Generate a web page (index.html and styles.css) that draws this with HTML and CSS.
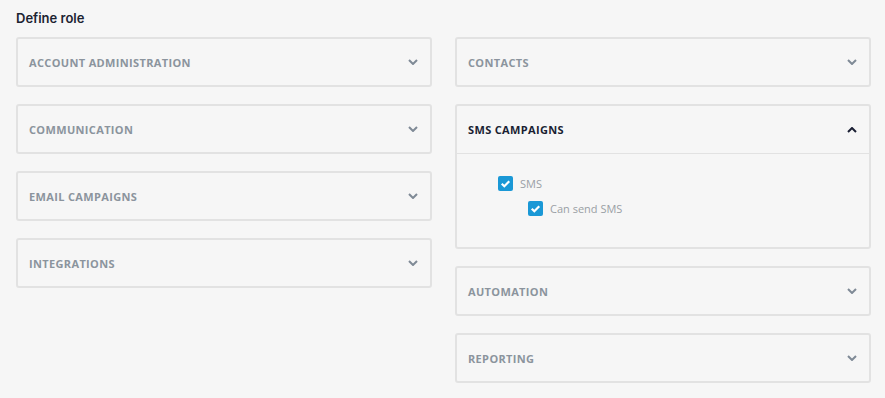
FILE: index.html
```html
<!DOCTYPE html>
<html>
<head>
<meta charset="utf-8">
<link rel="stylesheet" href="styles.css">
</head>
<body>
<div class="page">
  <h1 class="title">Define role</h1>
  <div class="columns">
    <div class="col">
      <div class="card"><div class="head"><span class="label">Account administration</span><svg class="chev" viewBox="0 0 10 6"><path d="M1 1l4 4 4-4"/></svg></div></div>
      <div class="card"><div class="head"><span class="label">Communication</span><svg class="chev" viewBox="0 0 10 6"><path d="M1 1l4 4 4-4"/></svg></div></div>
      <div class="card"><div class="head"><span class="label">Email campaigns</span><svg class="chev" viewBox="0 0 10 6"><path d="M1 1l4 4 4-4"/></svg></div></div>
      <div class="card"><div class="head"><span class="label">Integrations</span><svg class="chev" viewBox="0 0 10 6"><path d="M1 1l4 4 4-4"/></svg></div></div>
    </div>
    <div class="col">
      <div class="card"><div class="head"><span class="label">Contacts</span><svg class="chev" viewBox="0 0 10 6"><path d="M1 1l4 4 4-4"/></svg></div></div>
      <div class="card open">
        <div class="head"><span class="label">SMS campaigns</span><svg class="chev up" viewBox="0 0 10 6"><path d="M1 5l4-4 4 4"/></svg></div>
        <div class="body">
          <label class="check"><span class="box"><svg viewBox="0 0 14 14"><path d="M3.5 7.2l2.4 2.4 4.6-4.8"/></svg></span>SMS</label>
          <label class="check sub"><span class="box"><svg viewBox="0 0 14 14"><path d="M3.5 7.2l2.4 2.4 4.6-4.8"/></svg></span>Can send SMS</label>
        </div>
      </div>
      <div class="card"><div class="head"><span class="label">Automation</span><svg class="chev" viewBox="0 0 10 6"><path d="M1 1l4 4 4-4"/></svg></div></div>
      <div class="card"><div class="head"><span class="label">Reporting</span><svg class="chev" viewBox="0 0 10 6"><path d="M1 1l4 4 4-4"/></svg></div></div>
    </div>
  </div>
</div>
</body>
</html>
```

FILE: styles.css
```css
html, body {
  margin: 0;
  padding: 0;
  background: #f6f6f6;
}
.page {
  padding: 10px 14px 0 16px;
  font-family: "Open Sans", "Liberation Sans", sans-serif;
}
.title {
  margin: 0 0 10px 0;
  font-family: "Inter", "Open Sans", sans-serif;
  font-size: 13px;
  font-weight: 600;
  color: #1c2331;
  line-height: 17px;
}
.columns {
  display: grid;
  grid-template-columns: 416px 416px;
  column-gap: 23px;
  align-items: start;
}
.col {
  display: flex;
  flex-direction: column;
  gap: 17px;
}
.card {
  border: 2px solid #e2e2e2;
  border-radius: 3px;
  background: #f6f6f6;
}
.head {
  height: 46px;
  display: flex;
  align-items: center;
  justify-content: space-between;
  padding: 0 12px 0 11px;
}
.label {
  text-transform: uppercase;
  font-size: 11px;
  font-weight: 700;
  letter-spacing: 0.35px;
  color: #8b949d;
}
.chev {
  width: 10px;
  height: 6px;
  fill: none;
  stroke: #7f8a96;
  stroke-width: 2;
}
.open .head {
  border-bottom: 1px solid #e2e2e2;
  height: 47px;
}
.open .label {
  color: #1a1f33;
}
.chev.up {
  stroke: #1a1f33;
}
.body {
  padding: 22px 0 31px 41px;
  display: flex;
  flex-direction: column;
  gap: 10px;
}
.check {
  display: flex;
  align-items: center;
  gap: 7px;
  font-size: 11px;
  color: #9a9fa5;
  line-height: 15px;
}
.check.sub {
  padding-left: 30px;
}
.box {
  width: 15px;
  height: 15px;
  border-radius: 2px;
  background: #1a98d6;
  display: flex;
}
.box svg {
  width: 15px;
  height: 15px;
  fill: none;
  stroke: #fff;
  stroke-width: 2;
}
```
